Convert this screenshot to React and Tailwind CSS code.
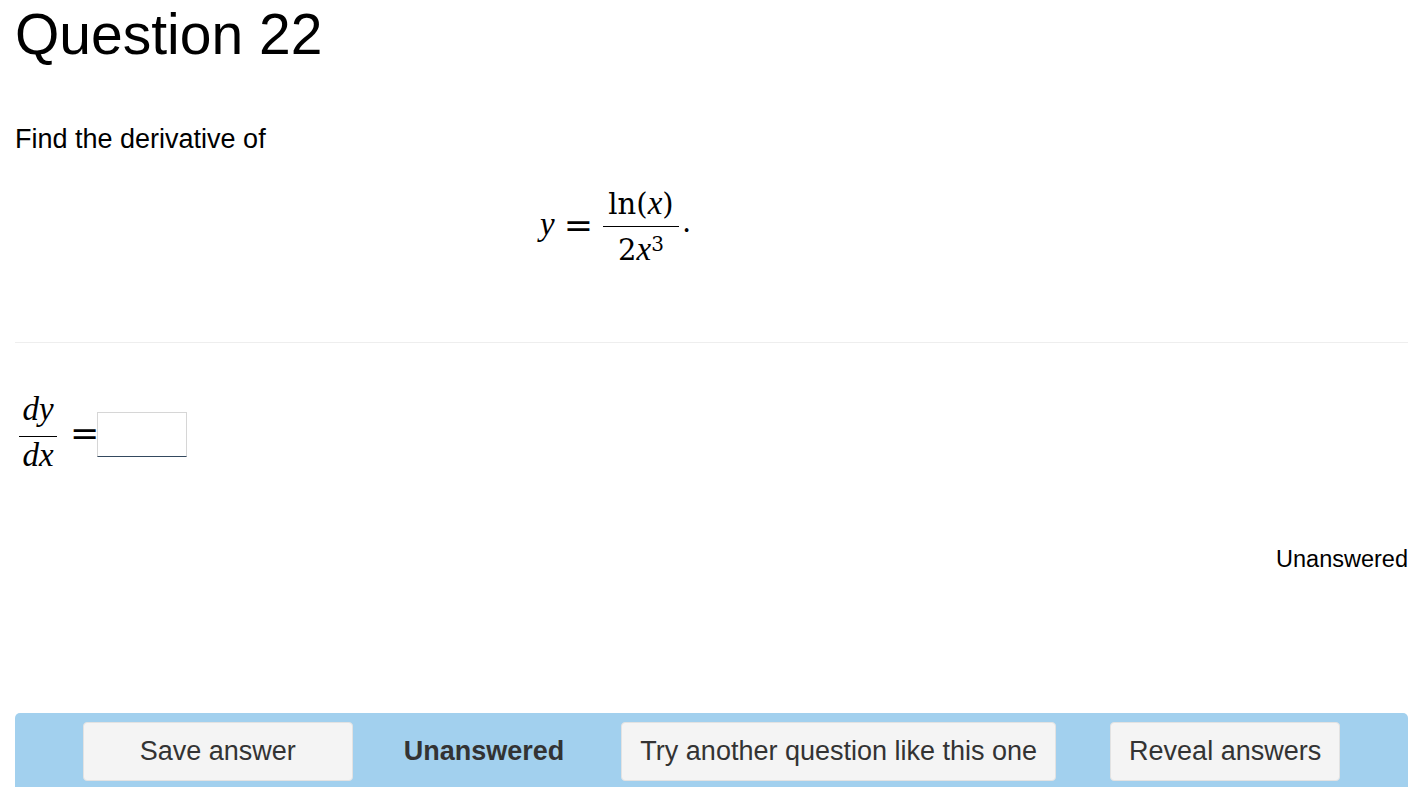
import React from 'react';

const uprightFont = { fontFamily: '"DejaVu Serif", "Liberation Serif", serif' };
const italicFont = { fontFamily: '"Liberation Serif", "Times New Roman", serif' };

function V({ children }) {
  return (
    <i className="text-[33px]" style={italicFont}>
      {children}
    </i>
  );
}

function Fraction({ top, bottom, gapTop, gapBottom, width }) {
  return (
    <span className={`flex flex-col items-center ${width}`}>
      <span className="block h-[34px] whitespace-nowrap leading-[34px]">{top}</span>
      <span className={`block h-[1.4px] w-full bg-black ${gapTop}`} />
      <span className={`block h-[34px] whitespace-nowrap leading-[34px] ${gapBottom}`}>{bottom}</span>
    </span>
  );
}

function App() {
  return (
    <div className="min-h-screen bg-white pl-[15px] pr-[12px] text-black" style={{ fontFamily: '"Liberation Sans", Arial, sans-serif' }}>
      <h1 className="h-[69px] text-[57px] leading-[69px] font-normal">Question 22</h1>

      <p className="mt-[50px] text-[27px] leading-[40px]">Find the derivative of</p>

      <div className="mt-[27px] flex h-[80px] items-start pl-[525px] text-[29px]" style={uprightFont}>
        <span className="mt-[21px] leading-[34px]">
          <V>y</V>
        </span>
        <span className="ml-[9px] mt-[22px] text-[35px] leading-[34px]">=</span>
        <span className="ml-[10px]">
          <Fraction
            top={<>ln(<V>x</V>)</>}
            bottom={<>2<V>x</V><sup className="top-[-9px] text-[20px]">3</sup></>}
            gapTop="mt-[5.5px]"
            gapBottom="mt-[5px]"
            width="w-[76px]"
          />
        </span>
        <span className="ml-[3px] mt-[19px] leading-[34px]">.</span>
      </div>

      <div className="mt-[76px] border-t border-[#eeeeee]" />

      <div className="mt-[49px] flex h-[81px] items-start pl-[4px] text-[29px]" style={uprightFont}>
        <Fraction
          top={<V>dy</V>}
          bottom={<V>dx</V>}
          gapTop="mt-[9.5px]"
          gapBottom="mt-[1.5px]"
          width="w-[38px]"
        />
        <span className="ml-[13px] mt-[24px] text-[35px] leading-[34px]">=</span>
        <input
          type="text"
          className="-ml-[2px] mt-[20px] h-[45px] w-[90px] border border-[#d6d6d6] border-b-[#34495e] bg-white outline-none"
        />
      </div>

      <div className="mt-[71px] text-right text-[23.5px] leading-[30px]">Unanswered</div>

      <div className="mt-[139px] flex items-center justify-center rounded-t-[5px] bg-[#a2d0ee] pt-[9px] pb-[15px] text-[27px] text-[#333333]">
        <button type="button" className="h-[59px] w-[270px] rounded-[4px] border border-[#e2e2e2] bg-[#f4f4f4]">
          Save answer
        </button>
        <span className="ml-[51px] font-bold">Unanswered</span>
        <button type="button" className="ml-[57px] h-[59px] rounded-[4px] border border-[#e2e2e2] bg-[#f4f4f4] px-[18px]">
          Try another question like this one
        </button>
        <button type="button" className="ml-[54px] h-[59px] rounded-[4px] border border-[#e2e2e2] bg-[#f4f4f4] px-[18px]">
          Reveal answers
        </button>
      </div>
    </div>
  );
}

export default App;
